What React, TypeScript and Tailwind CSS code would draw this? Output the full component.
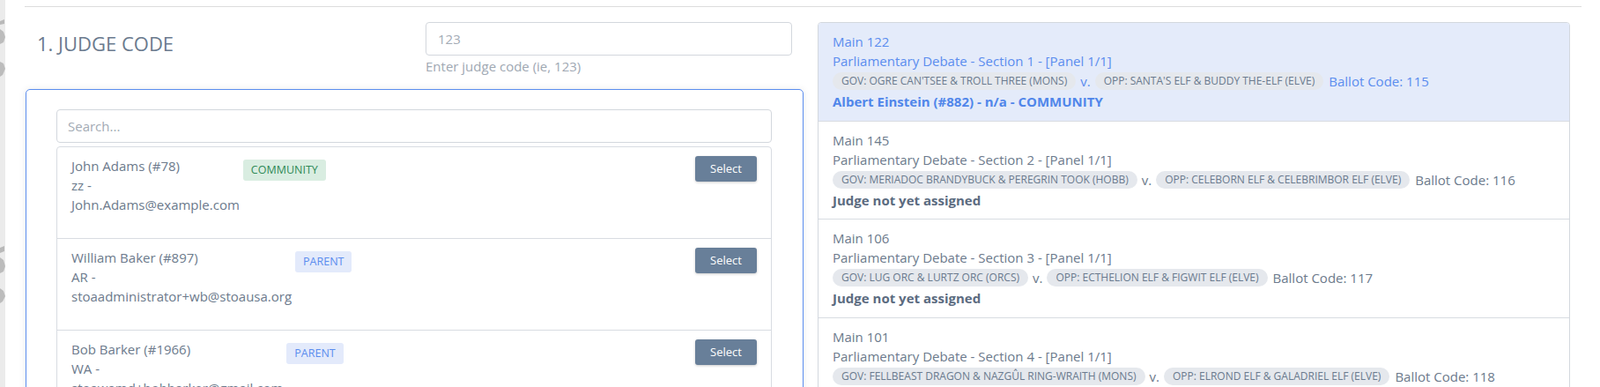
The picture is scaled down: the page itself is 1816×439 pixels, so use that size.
import React from "react";

type Match = {
  room: string;
  section: string;
  gov: string;
  opp: string;
  ballot: string;
  judge: string | null;
  active?: boolean;
};

const matches: Match[] = [
  {
    room: "Main 122",
    section: "Parliamentary Debate - Section 1 - [Panel 1/1]",
    gov: "GOV: OGRE CAN'TSEE & TROLL THREE (MONS)",
    opp: "OPP: SANTA'S ELF & BUDDY THE-ELF (ELVE)",
    ballot: "Ballot Code: 115",
    judge: "Albert Einstein (#882) - n/a - COMMUNITY",
    active: true,
  },
  {
    room: "Main 145",
    section: "Parliamentary Debate - Section 2 - [Panel 1/1]",
    gov: "GOV: MERIADOC BRANDYBUCK & PEREGRIN TOOK (HOBB)",
    opp: "OPP: CELEBORN ELF & CELEBRIMBOR ELF (ELVE)",
    ballot: "Ballot Code: 116",
    judge: null,
  },
  {
    room: "Main 106",
    section: "Parliamentary Debate - Section 3 - [Panel 1/1]",
    gov: "GOV: LUG ORC & LURTZ ORC (ORCS)",
    opp: "OPP: ECTHELION ELF & FIGWIT ELF (ELVE)",
    ballot: "Ballot Code: 117",
    judge: null,
  },
  {
    room: "Main 101",
    section: "Parliamentary Debate - Section 4 - [Panel 1/1]",
    gov: "GOV: FELLBEAST DRAGON & NAZGÛL RING-WRAITH (MONS)",
    opp: "OPP: ELROND ELF & GALADRIEL ELF (ELVE)",
    ballot: "Ballot Code: 118",
    judge: null,
  },
];

type Judge = {
  name: string;
  state: string;
  email: string;
  kind: "COMMUNITY" | "PARENT";
};

const judges: Judge[] = [
  { name: "John Adams (#78)", state: "zz -", email: "John.Adams@example.com", kind: "COMMUNITY" },
  { name: "William Baker (#897)", state: "AR -", email: "stoaadministrator+wb@stoausa.org", kind: "PARENT" },
  { name: "Bob Barker (#1966)", state: "WA -", email: "stoawamd+bobbarker@gmail.com", kind: "PARENT" },
];

function Pill({ children }: { children: React.ReactNode }) {
  return (
    <span className="inline-flex h-[20px] items-center whitespace-nowrap rounded-full bg-[#e5e8ed] px-[10px] text-[12px] leading-[20px] text-[#6a7a8e]">
      {children}
    </span>
  );
}

function MatchItem({ m, first }: { m: Match; first: boolean }) {
  const tone = m.active ? "text-[#5b8def]" : "text-[#6c7a8c]";
  return (
    <div
      className={`${first ? "" : "border-t border-[#d8dce2]"} ${
        m.active ? "bg-[#e4ebfa]" : "bg-white"
      } px-[16px] pt-[10px] pb-[10.5px] text-[15px] leading-[22px] ${tone}`}
    >
      <div>{m.room}</div>
      <div>{m.section}</div>
      <div className="flex h-[24px] items-center gap-[5px] whitespace-nowrap">
        <Pill>{m.gov}</Pill>
        <span>v.</span>
        <Pill>{m.opp}</Pill>
        <span className="ml-[1px]">{m.ballot}</span>
      </div>
      {m.judge ? (
        <div className="font-bold text-[#5086ea]">{m.judge}</div>
      ) : (
        <div className="font-bold text-[#5b6b7f]">Judge not yet assigned</div>
      )}
    </div>
  );
}

function JudgeItem({ j, first }: { j: Judge; first: boolean }) {
  const badge =
    j.kind === "COMMUNITY"
      ? "bg-[#d9ede1] text-[#2f8a56]"
      : "bg-[#e3eafb] text-[#5b8def]";
  return (
    <div
      className={`${first ? "" : "border-t border-[#d8dce2]"} flex items-start px-[16px] pt-[10px] pb-[27px]`}
    >
      <div className="text-[15px] leading-[22px] text-[#6c7a8c]">
        <div>{j.name}</div>
        <div>{j.state}</div>
        <div>{j.email}</div>
      </div>
      <span
        className={`ml-[4px] mt-[4px] inline-flex h-[24px] items-center rounded-[3px] px-[9px] text-[12.5px] ${badge}`}
      >
        {j.kind}
      </span>
      <div className="flex-1" />
      <button className="h-[29px] w-[70px] rounded-[3px] bg-[#687f99] text-[13px] text-white shadow-[0_1px_3px_rgba(0,0,0,0.2)]">
        Select
      </button>
    </div>
  );
}

export default function App() {
  return (
    <div className="flex h-[439px] w-[1816px] overflow-hidden bg-white font-['Open_Sans',sans-serif]">
      <div className="w-[6px] shrink-0 bg-[#ebebeb]">
        <svg width="6" height="439" viewBox="0 0 6 439">
          <polygon points="0,24 5,22 5,27 0,28" fill="#b9b9b9" />
          <polygon points="0,33 4,36 6,42 4,48 0,50" fill="#bcbcbc" />
          <polygon points="0,70 4,72 6,78 3,85 0,87" fill="#bcbcbc" />
          <polygon points="0,281 5,279 5,285 0,287" fill="#b9b9b9" />
          <polygon points="0,292 4,295 6,302 4,308 0,310" fill="#bcbcbc" />
          <polygon points="0,327 4,330 6,336 3,342 0,344" fill="#bcbcbc" />
        </svg>
      </div>
      <div className="flex-1 pl-[22px] pr-[21px]">
        <div className="mt-[7px] border-t border-[#dcdcdc]" />
        <div className="flex">
          <div className="w-[884px] shrink-0">
            <div className="flex">
              <div className="w-[455px] shrink-0 pl-[14px] pt-[28px]">
                <h2 className="text-[22px] leading-[26.4px] font-normal text-[#6a7a8e]">
                  1. JUDGE CODE
                </h2>
              </div>
              <div className="w-[416px] pt-[17px]">
                <input
                  className="h-[38px] w-full rounded-[4px] border border-[#d3d7dd] px-[13px] text-[15px] text-[#6c7a8c] outline-none placeholder:text-[#a3abb5]"
                  placeholder="123"
                />
                <div className="mt-[1px] text-[15px] leading-[22px] text-[#a0a8b3]">
                  Enter judge code (ie, 123)
                </div>
              </div>
            </div>
            <div className="mt-[15px] ml-[1px] w-[883px] rounded-[5px] border border-[#5b8def] bg-white pt-[22px] pl-[34px] pr-[35px] shadow-[0_0_8px_rgba(0,0,0,0.08)]">
              <input
                className="h-[38px] w-full rounded-[4px] border border-[#d3d7dd] px-[12px] text-[15px] text-[#6c7a8c] outline-none placeholder:text-[#a3abb5]"
                placeholder="Search..."
              />
              <div className="mt-[4px] rounded-t-[4px] border border-[#d8dce2]">
                {judges.map((j, i) => (
                  <JudgeItem key={j.name} j={j} first={i === 0} />
                ))}
              </div>
            </div>
          </div>
          <div className="ml-[16px] w-[854px] shrink-0 pt-[17px]">
            <div className="overflow-hidden rounded-[4px] border border-[#d3d8de]">
              {matches.map((m, i) => (
                <MatchItem key={m.room} m={m} first={i === 0} />
              ))}
            </div>
          </div>
        </div>
      </div>
    </div>
  );
}
